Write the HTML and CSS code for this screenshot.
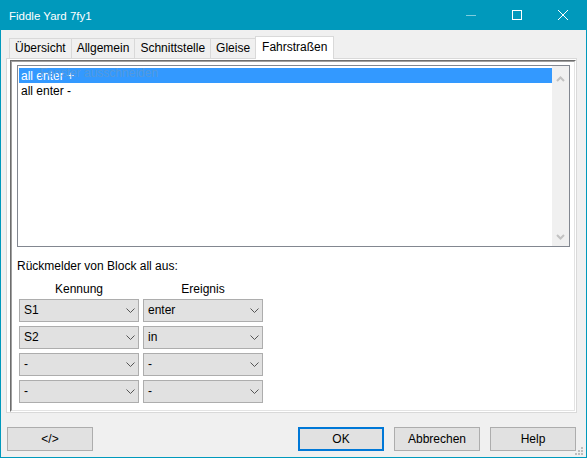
FILE: index.html
```html
<!DOCTYPE html>
<html lang="de">
<head>
<meta charset="utf-8">
<title>Fiddle Yard 7fy1</title>
<link rel="stylesheet" href="styles.css">
</head>
<body>
<div class="window">
  <div class="titlebar">
    <span class="title">Fiddle Yard 7fy1</span>
    <div class="caption">
      <div class="cap-btn">
        <svg width="10" height="10" viewBox="0 0 10 10"><line x1="0" y1="5.5" x2="10" y2="5.5" stroke="#7FCCDD" stroke-width="1"/></svg>
      </div>
      <div class="cap-btn">
        <svg width="10" height="10" viewBox="0 0 10 10"><rect x="0.5" y="0.5" width="9" height="9" fill="none" stroke="#fff" stroke-width="1"/></svg>
      </div>
      <div class="cap-btn">
        <svg width="10" height="10" viewBox="0 0 10 10"><path d="M0 0 L10 10 M10 0 L0 10" stroke="#fff" stroke-width="1"/></svg>
      </div>
    </div>
  </div>

  <div class="client">
    <div class="tabs">
      <div class="tab">Übersicht</div>
      <div class="tab">Allgemein</div>
      <div class="tab">Schnittstelle</div>
      <div class="tab">Gleise</div>
      <div class="tab active">Fahrstraßen</div>
    </div>

    <div class="panel">
      <div class="sunken">
        <div class="sunken-inner">
          <div class="listbox">
            <div class="items">
              <div class="item selected">all enter +<span class="ghost">Fenster ausschneiden</span></div>
              <div class="item">all enter -</div>
            </div>
            <div class="vscroll">
              <svg width="9" height="6" viewBox="0 0 9 6"><polyline points="1,5 4.5,1.5 8,5" fill="none" stroke="#C2C2C2" stroke-width="2"/></svg>
              <svg width="9" height="6" viewBox="0 0 9 6"><polyline points="1,1 4.5,4.5 8,1" fill="none" stroke="#C2C2C2" stroke-width="2"/></svg>
            </div>
          </div>

          <div class="label">Rückmelder von Block all aus:</div>

          <div class="fgrid heads">
            <div class="head">Kennung</div>
            <div class="head">Ereignis</div>
          </div>

          <div class="fgrid combos">
            <div class="combo"><span class="val">S1</span><svg class="chev" width="9" height="5" viewBox="0 0 9 5"><polyline points="0.5,0.5 4.5,4.5 8.5,0.5" fill="none" stroke="#555" stroke-width="1"/></svg></div>
            <div class="combo"><span class="val">enter</span><svg class="chev" width="9" height="5" viewBox="0 0 9 5"><polyline points="0.5,0.5 4.5,4.5 8.5,0.5" fill="none" stroke="#555" stroke-width="1"/></svg></div>
            <div class="combo"><span class="val">S2</span><svg class="chev" width="9" height="5" viewBox="0 0 9 5"><polyline points="0.5,0.5 4.5,4.5 8.5,0.5" fill="none" stroke="#555" stroke-width="1"/></svg></div>
            <div class="combo"><span class="val">in</span><svg class="chev" width="9" height="5" viewBox="0 0 9 5"><polyline points="0.5,0.5 4.5,4.5 8.5,0.5" fill="none" stroke="#555" stroke-width="1"/></svg></div>
            <div class="combo"><span class="val">-</span><svg class="chev" width="9" height="5" viewBox="0 0 9 5"><polyline points="0.5,0.5 4.5,4.5 8.5,0.5" fill="none" stroke="#555" stroke-width="1"/></svg></div>
            <div class="combo"><span class="val">-</span><svg class="chev" width="9" height="5" viewBox="0 0 9 5"><polyline points="0.5,0.5 4.5,4.5 8.5,0.5" fill="none" stroke="#555" stroke-width="1"/></svg></div>
            <div class="combo"><span class="val">-</span><svg class="chev" width="9" height="5" viewBox="0 0 9 5"><polyline points="0.5,0.5 4.5,4.5 8.5,0.5" fill="none" stroke="#555" stroke-width="1"/></svg></div>
            <div class="combo"><span class="val">-</span><svg class="chev" width="9" height="5" viewBox="0 0 9 5"><polyline points="0.5,0.5 4.5,4.5 8.5,0.5" fill="none" stroke="#555" stroke-width="1"/></svg></div>
          </div>
        </div>
      </div>
    </div>

    <div class="footer">
      <div class="btn">&lt;/&gt;</div>
      <div class="btn default push">OK</div>
      <div class="btn">Abbrechen</div>
      <div class="btn">Help</div>
    </div>
  </div>

  <svg class="grip" width="9" height="9" viewBox="0 0 9 9">
    <rect x="6" y="0" width="2" height="2" fill="#BDBDBD"/>
    <rect x="3" y="3" width="2" height="2" fill="#BDBDBD"/>
    <rect x="6" y="3" width="2" height="2" fill="#BDBDBD"/>
    <rect x="0" y="6" width="2" height="2" fill="#BDBDBD"/>
    <rect x="3" y="6" width="2" height="2" fill="#BDBDBD"/>
    <rect x="6" y="6" width="2" height="2" fill="#BDBDBD"/>
  </svg>
</div>
</body>
</html>
```

FILE: styles.css
```css
* { box-sizing: border-box; }

html, body {
  margin: 0;
  padding: 0;
}

body {
  width: 587px;
  height: 458px;
  overflow: hidden;
  font-family: "Liberation Sans", Arial, sans-serif;
  font-size: 12px;
  color: #000;
  background: #F0F0F0;
}

.window {
  position: relative;
  width: 587px;
  height: 458px;
  border: 1px solid #0099BC;
  border-top: 0;
  background: #F0F0F0;
  display: flex;
  flex-direction: column;
}

/* title bar */
.titlebar {
  flex: none;
  height: 30px;
  background: #0099BC;
  color: #fff;
  display: flex;
  align-items: center;
}

.title {
  flex: 1;
  padding-left: 8px;
  padding-top: 2px;
  font-size: 11.5px;
}

.caption {
  display: flex;
  height: 30px;
}

.cap-btn {
  width: 46px;
  height: 30px;
  display: flex;
  align-items: center;
  justify-content: center;
}

.cap-btn svg { display: block; }

/* client */
.client {
  flex: 1;
  padding: 6px 9px 0 5px;
  display: flex;
  flex-direction: column;
}

.tabs {
  display: flex;
  align-items: flex-end;
  height: 22px;
  padding-left: 3px;
}

.tab {
  height: 20px;
  line-height: 19px;
  padding: 0 5px;
  border: 1px solid #D9D9D9;
  border-bottom: 0;
  margin-right: -1px;
  background: #F0F0F0;
  white-space: nowrap;
}

.tab.active {
  position: relative;
  z-index: 1;
  height: 23px;
  line-height: 20px;
  margin-bottom: -1px;
  padding: 0 6px;
  background: #fff;
}

.panel {
  height: 355px;
  border: 1px solid #D9D9D9;
  background: #fff;
  padding: 1px 0 0 3px;
}

.sunken {
  height: 100%;
  border: 1px solid;
  border-color: #6D6D6D #FFFFFF #FFFFFF #6D6D6D;
}

.sunken-inner {
  height: 100%;
  border: 1px solid;
  border-color: #A0A0A0 #E3E3E3 #E3E3E3 #A0A0A0;
  padding: 3px 4px 0 5px;
}

/* list box */
.listbox {
  height: 182px;
  border: 1px solid #828790;
  background: #fff;
  display: flex;
}

.items {
  flex: 1;
  padding: 2px 0 0 1px;
}

.item {
  height: 15px;
  line-height: 17px;
  padding-left: 2px;
  white-space: nowrap;
}

.item.selected {
  position: relative;
  background: #3399FF;
  color: #fff;
}

.ghost {
  position: absolute;
  left: 21px;
  top: -3px;
  color: #5299DE;
}

.vscroll {
  width: 17px;
  background: #F0F0F0;
  display: flex;
  flex-direction: column;
  justify-content: space-between;
  align-items: center;
  padding: 10px 0 6px;
}

.vscroll svg { display: block; }

.label {
  margin-top: 12px;
  line-height: 15px;
}

.fgrid {
  display: grid;
  grid-template-columns: 120px 120px;
  column-gap: 4px;
  padding-left: 2px;
}

.heads {
  margin-top: 8px;
}

.head {
  line-height: 15px;
  text-align: center;
}

.combos {
  margin-top: 2px;
  grid-auto-rows: 23px;
  row-gap: 4px;
}

.combo {
  border: 1px solid #ADADAD;
  background: #E1E1E1;
  display: flex;
  align-items: center;
  padding: 0 3px 0 4px;
}

.val {
  flex: 1;
  line-height: 21px;
}

.chev { display: block; }

/* footer */
.footer {
  margin-top: 14px;
  display: flex;
  padding: 0 1px;
}

.btn {
  width: 86px;
  height: 24px;
  border: 1px solid #ADADAD;
  background: #E1E1E1;
  line-height: 22px;
  text-align: center;
}

.btn + .btn { margin-left: 10px; }

.btn.push { margin-left: auto; }

.btn.default {
  border: 2px solid #0078D7;
  line-height: 20px;
}

.grip {
  position: absolute;
  right: 2px;
  bottom: 1px;
  display: block;
}
```
